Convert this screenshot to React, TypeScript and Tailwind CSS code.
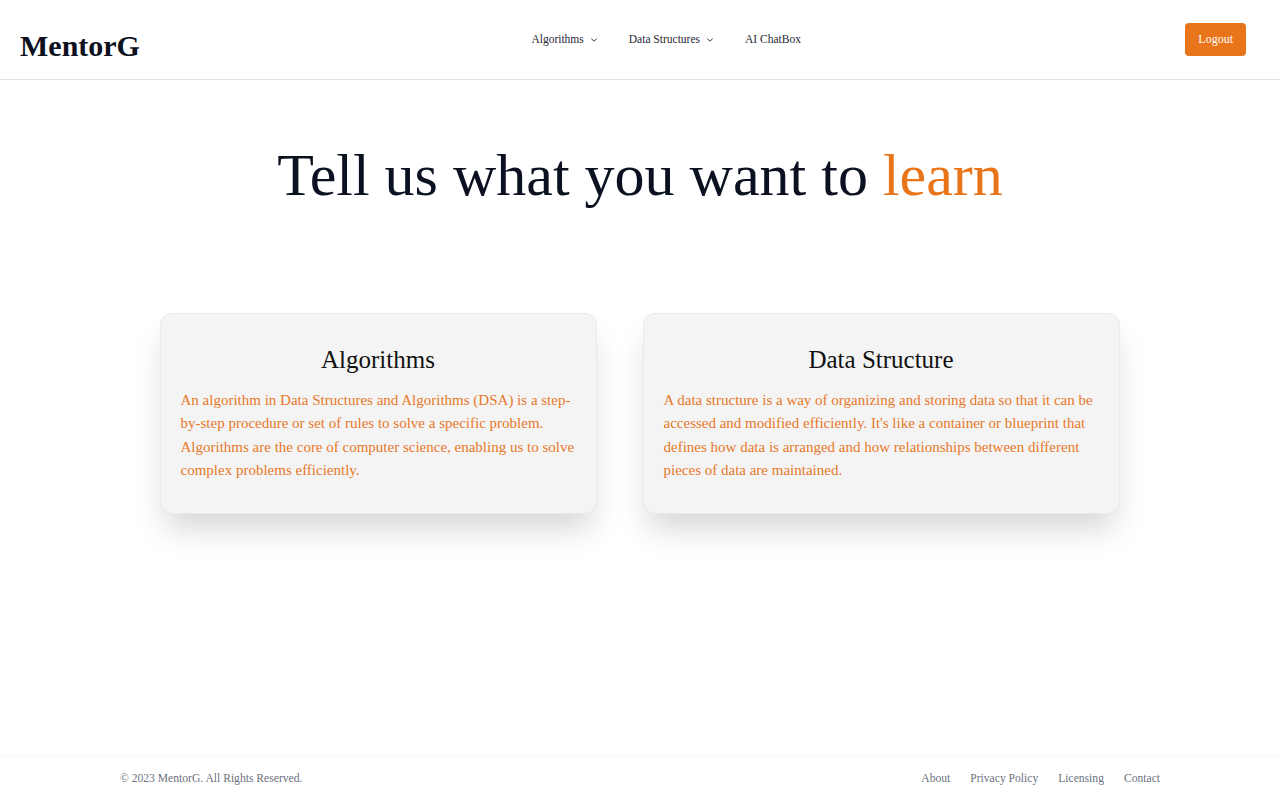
import { ChevronDown } from "lucide-react";

const serif = "font-['Liberation_Serif','Times_New_Roman',serif]";

function NavItem({ label, dropdown }: { label: string; dropdown?: boolean }) {
  return (
    <button className="flex items-center gap-[5px] text-[11.5px] text-[#1f2937]">
      {label}
      {dropdown && <ChevronDown className="h-[10px] w-[10px]" strokeWidth={2.2} />}
    </button>
  );
}

function Card({ title, text, width }: { title: string; text: string; width: string }) {
  return (
    <div className={`${width} rounded-xl border border-[#e9e9e9] bg-[#f4f4f4] px-5 pt-[27px] pb-[30px] shadow-[0_20px_32px_-6px_rgba(0,0,0,0.17)]`}>
      <h2 className="text-center text-[25px] leading-[38px] text-[#111]">{title}</h2>
      <p className="mt-[10px] text-[15px] leading-[23.4px] text-[#e8782a]">{text}</p>
    </div>
  );
}

export default function App() {
  return (
    <div className={`${serif} flex min-h-screen flex-col bg-white`}>
      <header className="flex h-20 items-center justify-between border-b border-[#e2e2e2] pl-5 pr-[34px]">
        <div className="pt-3 text-[30px] font-bold text-[#0b1120]">MentorG</div>
        <nav className="ml-[7px] flex items-center gap-[30px]">
          <NavItem label="Algorithms" dropdown />
          <NavItem label="Data Structures" dropdown />
          <NavItem label="AI ChatBox" />
        </nav>
        <div className="flex justify-end">
          <button className="rounded-[4px] bg-[#e8751a] px-[13px] py-[8px] text-[12px] leading-[17px] text-white">
            Logout
          </button>
        </div>
      </header>

      <main className="flex-1 pt-[65px]">
        <h1 className="text-center text-[60px] leading-[60px] text-[#0b1120]">
          Tell us what you want to <span className="text-[#e8751a]">learn</span>
        </h1>
        <div className="mt-[108px] flex justify-center gap-[46px] pr-[1px]">
          <Card
            width="w-[437px]"
            title="Algorithms"
            text="An algorithm in Data Structures and Algorithms (DSA) is a step-by-step procedure or set of rules to solve a specific problem. Algorithms are the core of computer science, enabling us to solve complex problems efficiently."
          />
          <Card
            width="w-[477px]"
            title="Data Structure"
            text="A data structure is a way of organizing and storing data so that it can be accessed and modified efficiently. It's like a container or blueprint that defines how data is arranged and how relationships between different pieces of data are maintained."
          />
        </div>
      </main>

      <footer className="bg-white shadow-[0_-2px_6px_rgba(0,0,0,0.03)]">
        <div className="mx-auto flex h-[43px] max-w-[1040px] items-center justify-between text-[11.6px] text-[#6b7280]">
          <span>© 2023 MentorG. All Rights Reserved.</span>
          <div className="flex gap-5">
            <a>About</a>
            <a>Privacy Policy</a>
            <a>Licensing</a>
            <a>Contact</a>
          </div>
        </div>
      </footer>
    </div>
  );
}
